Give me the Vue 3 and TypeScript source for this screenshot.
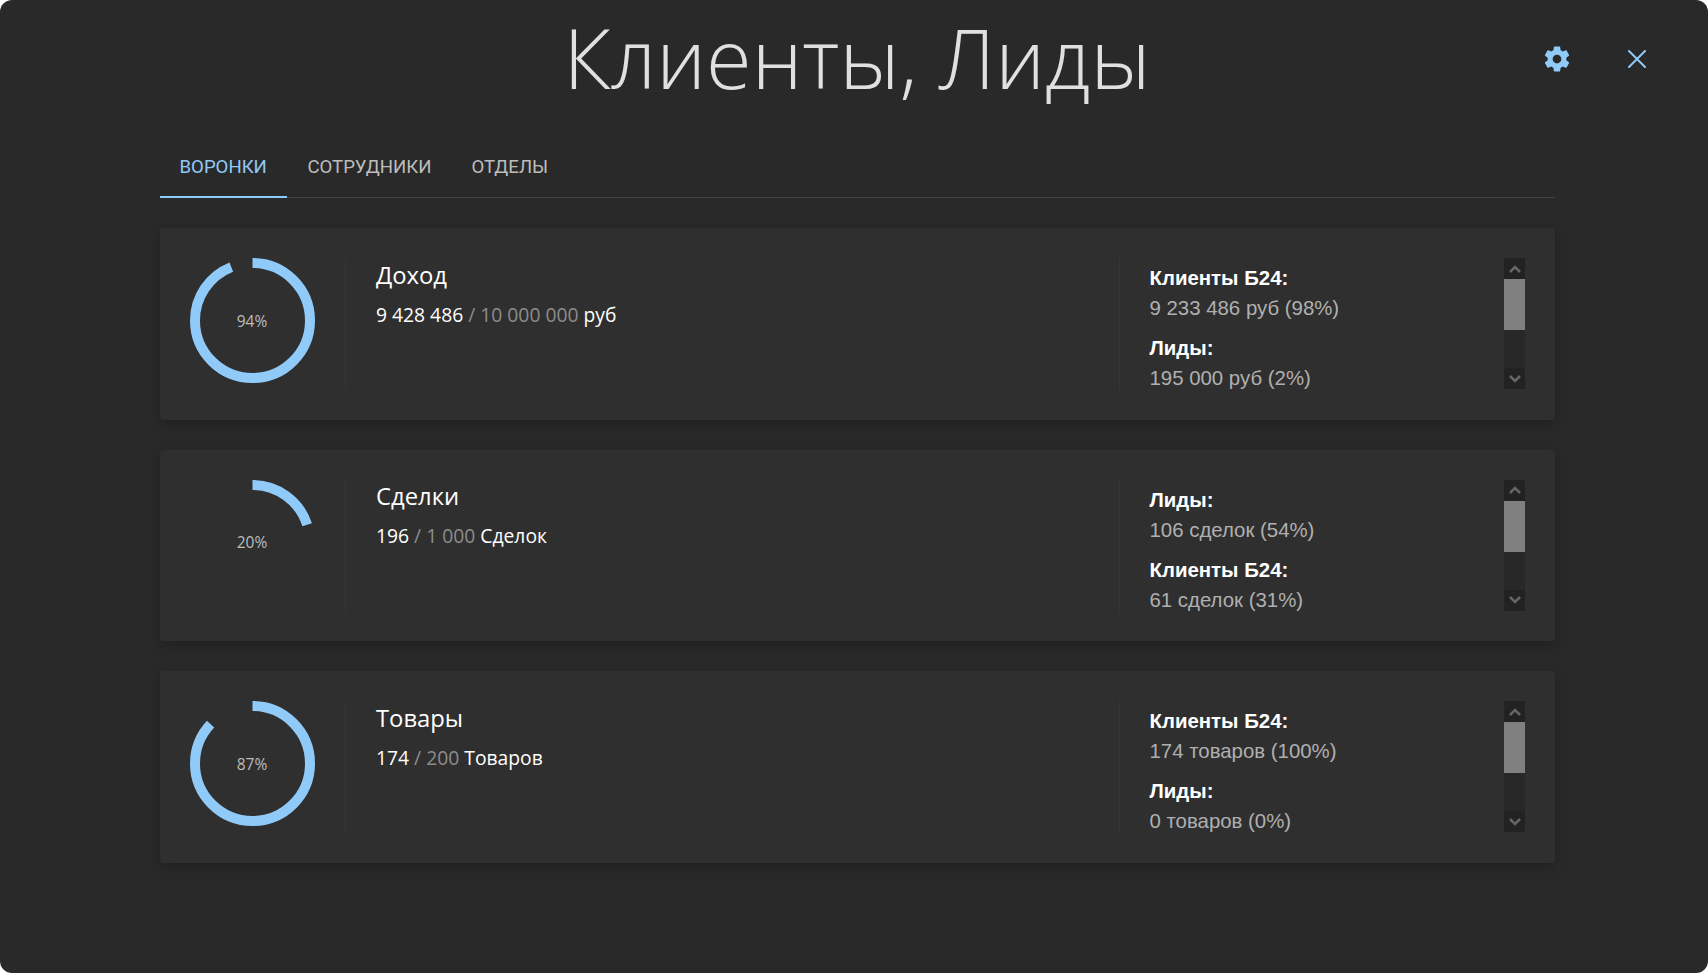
<script setup lang="ts">
interface Detail {
  label: string;
  value: string;
}

interface Funnel {
  title: string;
  percent: number;
  current: string;
  total: string;
  unit: string;
  details: Detail[];
}

const tabs = ['Воронки', 'Сотрудники', 'Отделы'];

const funnels: Funnel[] = [
  {
    title: 'Доход',
    percent: 94,
    current: '9 428 486',
    total: '10 000 000',
    unit: 'руб',
    details: [
      { label: 'Клиенты Б24:', value: '9 233 486 руб (98%)' },
      { label: 'Лиды:', value: '195 000 руб (2%)' }
    ]
  },
  {
    title: 'Сделки',
    percent: 20,
    current: '196',
    total: '1 000',
    unit: 'Сделок',
    details: [
      { label: 'Лиды:', value: '106 сделок (54%)' },
      { label: 'Клиенты Б24:', value: '61 сделок (31%)' }
    ]
  },
  {
    title: 'Товары',
    percent: 87,
    current: '174',
    total: '200',
    unit: 'Товаров',
    details: [
      { label: 'Клиенты Б24:', value: '174 товаров (100%)' },
      { label: 'Лиды:', value: '0 товаров (0%)' }
    ]
  }
];
</script>

<template>
  <div class="window">
    <header class="header">
      <h1 class="title">Клиенты, Лиды</h1>
      <div class="actions">
        <svg class="icon-gear" viewBox="0 0 24 24" width="30" height="30">
          <path d="M12,15.5A3.5,3.5 0 0,1 8.5,12A3.5,3.5 0 0,1 12,8.5A3.5,3.5 0 0,1 15.5,12A3.5,3.5 0 0,1 12,15.5M19.43,12.97C19.47,12.65 19.5,12.33 19.5,12C19.5,11.67 19.47,11.34 19.43,11L21.54,9.37C21.73,9.22 21.78,8.95 21.66,8.73L19.66,5.27C19.54,5.05 19.27,4.96 19.05,5.05L16.56,6.05C16.04,5.66 15.5,5.32 14.87,5.07L14.5,2.42C14.46,2.18 14.25,2 14,2H10C9.75,2 9.54,2.18 9.5,2.42L9.13,5.07C8.5,5.32 7.96,5.66 7.44,6.05L4.95,5.05C4.73,4.96 4.46,5.05 4.34,5.27L2.34,8.73C2.21,8.95 2.27,9.22 2.46,9.37L4.57,11C4.53,11.34 4.5,11.67 4.5,12C4.5,12.33 4.53,12.65 4.57,12.97L2.46,14.63C2.27,14.78 2.21,15.05 2.34,15.27L4.34,18.73C4.46,18.95 4.73,19.03 4.95,18.95L7.44,17.94C7.96,18.34 8.5,18.68 9.13,18.93L9.5,21.58C9.54,21.82 9.75,22 10,22H14C14.25,22 14.46,21.82 14.5,21.58L14.87,18.93C15.5,18.67 16.04,18.34 16.56,17.94L19.05,18.95C19.27,19.03 19.54,18.95 19.66,18.73L21.66,15.27C21.78,15.05 21.73,14.78 21.54,14.63L19.43,12.97Z" />
        </svg>
        <svg class="icon-close" viewBox="0 0 18 18" width="18" height="18">
          <path d="M1 1L17 17M17 1L1 17" />
        </svg>
      </div>
    </header>

    <main class="content">
      <nav class="tabs">
        <span v-for="(tab, i) in tabs" :key="tab" class="tab" :class="{ active: i === 0 }">{{ tab }}</span>
      </nav>

      <section v-for="funnel in funnels" :key="funnel.title" class="card">
        <div class="chart">
          <svg class="ring" viewBox="0 0 125 125" width="125" height="125">
            <circle
              cx="62.5"
              cy="62.5"
              r="57.5"
              pathLength="100"
              :stroke-dasharray="`${funnel.percent} 100`"
            />
          </svg>
          <span class="ring-label">{{ funnel.percent }}%</span>
        </div>

        <div class="summary">
          <div class="summary-title">{{ funnel.title }}</div>
          <div class="summary-value">
            {{ funnel.current }} <span class="muted">/ {{ funnel.total }}</span> {{ funnel.unit }}
          </div>
        </div>

        <div class="details">
          <div v-for="item in funnel.details" :key="item.label" class="detail">
            <div class="detail-label">{{ item.label }}</div>
            <div class="detail-value">{{ item.value }}</div>
          </div>
        </div>

        <div class="scrollbar">
          <div class="scroll-btn">
            <svg viewBox="0 0 12 8" width="12" height="8"><path d="M1 7L6 2l5 5" /></svg>
          </div>
          <div class="scroll-thumb"></div>
          <div class="scroll-track"></div>
          <div class="scroll-btn">
            <svg viewBox="0 0 12 8" width="12" height="8"><path d="M1 1l5 5 5-5" /></svg>
          </div>
        </div>
      </section>
    </main>
  </div>
</template>

<style scoped>
.window {
  box-sizing: border-box;
  width: 1708px;
  height: 973px;
  border-radius: 12px;
  overflow: hidden;
  background: #292929;
}

.header {
  display: grid;
  grid-template-columns: 1fr auto 1fr;
  align-items: center;
  height: 119px;
  padding: 0 62px 0 68px;
}

.title {
  grid-column: 2;
  margin: -7px 0 0;
  font-family: "Open Sans", "Noto Sans", sans-serif;
  font-weight: 300;
  font-size: 83px;
  line-height: 119px;
  color: #e0e0e0;
  white-space: nowrap;
}

.actions {
  grid-column: 3;
  justify-self: end;
  display: flex;
  align-items: center;
  gap: 56px;
  margin-top: -2px;
}

.icon-gear {
  fill: #90caf9;
}

.icon-close {
  fill: none;
  stroke: #90caf9;
  stroke-width: 2;
  stroke-linecap: round;
}

.content {
  padding: 20px 153px 0 160px;
}

.tabs {
  display: flex;
  height: 58px;
  border-bottom: 1px solid #444;
  margin-bottom: 30px;
}

.tab {
  display: flex;
  align-items: center;
  height: 59px;
  box-sizing: border-box;
  padding: 0 20px 3px;
  font-family: Roboto, "Liberation Sans", sans-serif;
  font-size: 18.6px;
  text-transform: uppercase;
  color: #bdbdbd;
}

.tab.active {
  color: #90caf9;
  padding: 0 20.5px 1px 19.5px;
  border-bottom: 2px solid #90caf9;
}

.card {
  display: flex;
  box-sizing: border-box;
  height: 191.5px;
  margin-bottom: 30px;
  padding: 30px;
  border-radius: 4px;
  background: #2f2f2f;
  box-shadow: 0 4px 14px rgba(0, 0, 0, 0.22);
}

.chart {
  position: relative;
  flex: none;
  box-sizing: border-box;
  width: 156px;
  height: 132px;
  border-right: 1px solid #363636;
}

.ring {
  display: block;
  transform: rotate(-90deg);
}

.ring circle {
  fill: none;
  stroke: #90caf9;
  stroke-width: 10;
}

.ring-label {
  position: absolute;
  left: -0.5px;
  top: 52.5px;
  width: 125px;
  text-align: center;
  font-family: "Open Sans", "Noto Sans", sans-serif;
  font-size: 15.5px;
  line-height: 20px;
  color: #bdbdbd;
}

.summary {
  flex: 1;
  padding: 0.5px 0 0 30px;
  font-family: "Open Sans", "Noto Sans", sans-serif;
  color: #fff;
}

.summary-title {
  font-size: 23.8px;
  line-height: 32px;
}

.summary-value {
  font-size: 19.3px;
  line-height: 28px;
  margin-top: 10px;
}

.muted {
  color: #8c8c8c;
}

.details {
  flex: none;
  box-sizing: border-box;
  width: 385px;
  height: 132px;
  padding: 5px 0 0 29.5px;
  overflow: hidden;
  border-left: 1px solid #363636;
  font-family: "Liberation Sans", Arial, sans-serif;
  font-size: 20.4px;
  line-height: 30px;
}

.detail + .detail {
  margin-top: 10px;
}

.detail-label {
  font-weight: 700;
  color: #fff;
}

.detail-value {
  color: #b0b0b0;
}

.scrollbar {
  flex: none;
  display: flex;
  flex-direction: column;
  width: 21px;
  height: 131px;
}

.scroll-btn {
  flex: none;
  display: flex;
  align-items: center;
  justify-content: center;
  height: 21px;
  background: #222;
}

.scroll-btn svg {
  fill: none;
  stroke: #666;
  stroke-width: 2.5;
}

.scroll-thumb {
  flex: none;
  height: 51px;
  background: #808080;
}

.scroll-track {
  flex: 1;
  background: #282828;
}
</style>

<style>
html,
body {
  background: #fff;
}
</style>
